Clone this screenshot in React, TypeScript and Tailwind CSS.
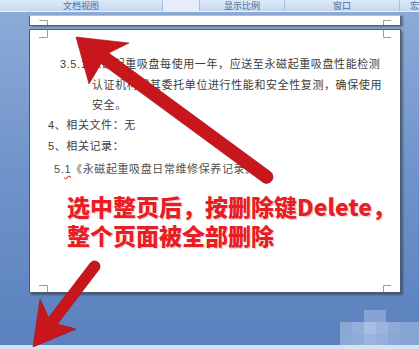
export default function App() {
  const line = "text-[11px] leading-[20px] tracking-[0.6px] whitespace-nowrap";
  return (
    <div className="relative flex h-[349px] w-[419px] flex-col overflow-hidden bg-gradient-to-b from-[#8eacd9] via-[#6f93ca] to-[#5a81be] font-['Noto_Sans_CJK_SC',sans-serif]">
      {/* ribbon group labels */}
      <div className="flex h-[12px] shrink-0 border-b border-[#e9f0f9] bg-gradient-to-b from-[#dde9f7] to-[#c7d9f0] text-[9px] leading-[11px] text-[#4a6ea6]">
        <div className="flex w-[163px] justify-center border-r border-[#a8c1e2]">文档视图</div>
        <div className="w-[37px] border-r border-[#a8c1e2] bg-[#e4edf8]" />
        <div className="flex w-[85px] justify-center border-r border-[#a8c1e2]">显示比例</div>
        <div className="flex w-[115px] justify-center border-r border-[#a8c1e2]">窗口</div>
        <div className="flex flex-1 justify-end overflow-hidden pr-[0px]">宏</div>
      </div>

      {/* document area */}
      <div className="flex flex-1 flex-col pl-[29px] pt-[3px]">
        {/* end of previous page */}
        <div className="h-[11px] w-[372px] border border-[#56606f] border-t-[#b5c2d2] bg-white shadow-[2px_1px_2px_rgba(0,0,0,0.35)]" />
        {/* current page */}
        <div className="mt-[3px] flex h-[264px] w-[372px] flex-col border border-[#4f5a6b] bg-white pt-[23px] text-[#3d3d3d] shadow-[2px_2px_2px_rgba(0,0,0,0.35)]">
          <div className={`${line} pl-[30px]`}>
            <span className="font-['Liberation_Sans',sans-serif]">3.5.1</span>
            <span className="ml-[3px]">永磁起重吸盘每使用一年，应送至永磁起重吸盘性能检测</span>
          </div>
          <div className={`${line} pl-[62px]`}>认证机构或其委托单位进行性能和安全性复测，确保使用</div>
          <div className={`${line} pl-[62px]`}>安全。</div>
          <div className={`${line} pl-[18px]`}>
            <span className="font-['Liberation_Sans',sans-serif]">4</span>、相关文件：无
          </div>
          <div className={`${line} pl-[18px]`}>
            <span className="font-['Liberation_Sans',sans-serif]">5</span>、相关记录：
          </div>
          <div className={`${line} mt-[2px] pl-[24px] text-[#505050]`}>
            <span className="font-['Liberation_Sans',sans-serif]">5.</span>
            <span className="font-['Liberation_Sans',sans-serif] underline decoration-[#e03030] decoration-wavy underline-offset-2">1</span>
            《永磁起重吸盘日常维修保养记录》
          </div>
          <div className="mt-[13px] pl-[37px] text-[23px] font-black leading-[29px] tracking-[0px] whitespace-nowrap text-[#e81d25] [text-shadow:0_0_2px_#fff,1px_1px_1px_rgba(120,0,0,0.25)]">
            <div>选中整页后，按删除键Delete，</div>
            <div>整个页面被全部删除</div>
          </div>
        </div>
      </div>

      {/* status bar */}
      <div className="h-[4px] shrink-0 bg-[#d7e2f1]" />

      {/* overlay drawings: page corner marks, arrows, watermark */}
      <svg className="pointer-events-none absolute inset-0" width="419" height="349" viewBox="0 0 419 349">
        <g stroke="#9c9c9c" strokeWidth="1" fill="none">
          <path d="M39.5,20.5 H47.5 V25" />
          <path d="M391,20.5 H383.5 V25" />
          <path d="M47.5,30 V37.5 H39" />
          <path d="M383.5,30 V37.5 H391" />
          <path d="M39,285.5 H47.5 V292" />
          <path d="M391,285.5 H383.5 V292" />
        </g>
        <g>
          <rect x="364" y="310" width="22" height="12" fill="#8eabd8" opacity="0.8" />
          <rect x="340" y="322" width="12" height="12" fill="#8aa8d6" />
          <rect x="352" y="322" width="12" height="12" fill="#93afda" />
          <rect x="364" y="322" width="12" height="12" fill="#a7bfe2" />
          <rect x="376" y="322" width="12" height="12" fill="#9ab4dd" />
          <rect x="388" y="322" width="12" height="12" fill="#8eabd8" />
          <rect x="400" y="322" width="19" height="12" fill="#87a5d4" />
          <rect x="340" y="334" width="12" height="11" fill="#8caad7" />
          <rect x="352" y="334" width="12" height="11" fill="#8fabd8" />
          <rect x="364" y="334" width="12" height="11" fill="#9ab4dd" />
          <rect x="376" y="334" width="12" height="11" fill="#93afda" />
          <rect x="388" y="334" width="12" height="11" fill="#8aa8d6" />
          <rect x="400" y="334" width="19" height="11" fill="#86a4d3" />
        </g>
        <g fill="#c8161d" stroke="#a50f14" strokeWidth="0.6" strokeLinejoin="round">
          <path d="M76,37 L129,43 L108.8,53.1 L270.9,172.1 A6.5,6.5 0 0 1 263.2,182.5 L101.2,63.5 L89,84 Z" />
          <path d="M33,347 L40,299 L48.6,317.5 L90.2,263.1 A5.5,5.5 0 0 1 99,269.7 L57.4,324.1 L76,329 Z" />
        </g>
      </svg>
    </div>
  );
}
